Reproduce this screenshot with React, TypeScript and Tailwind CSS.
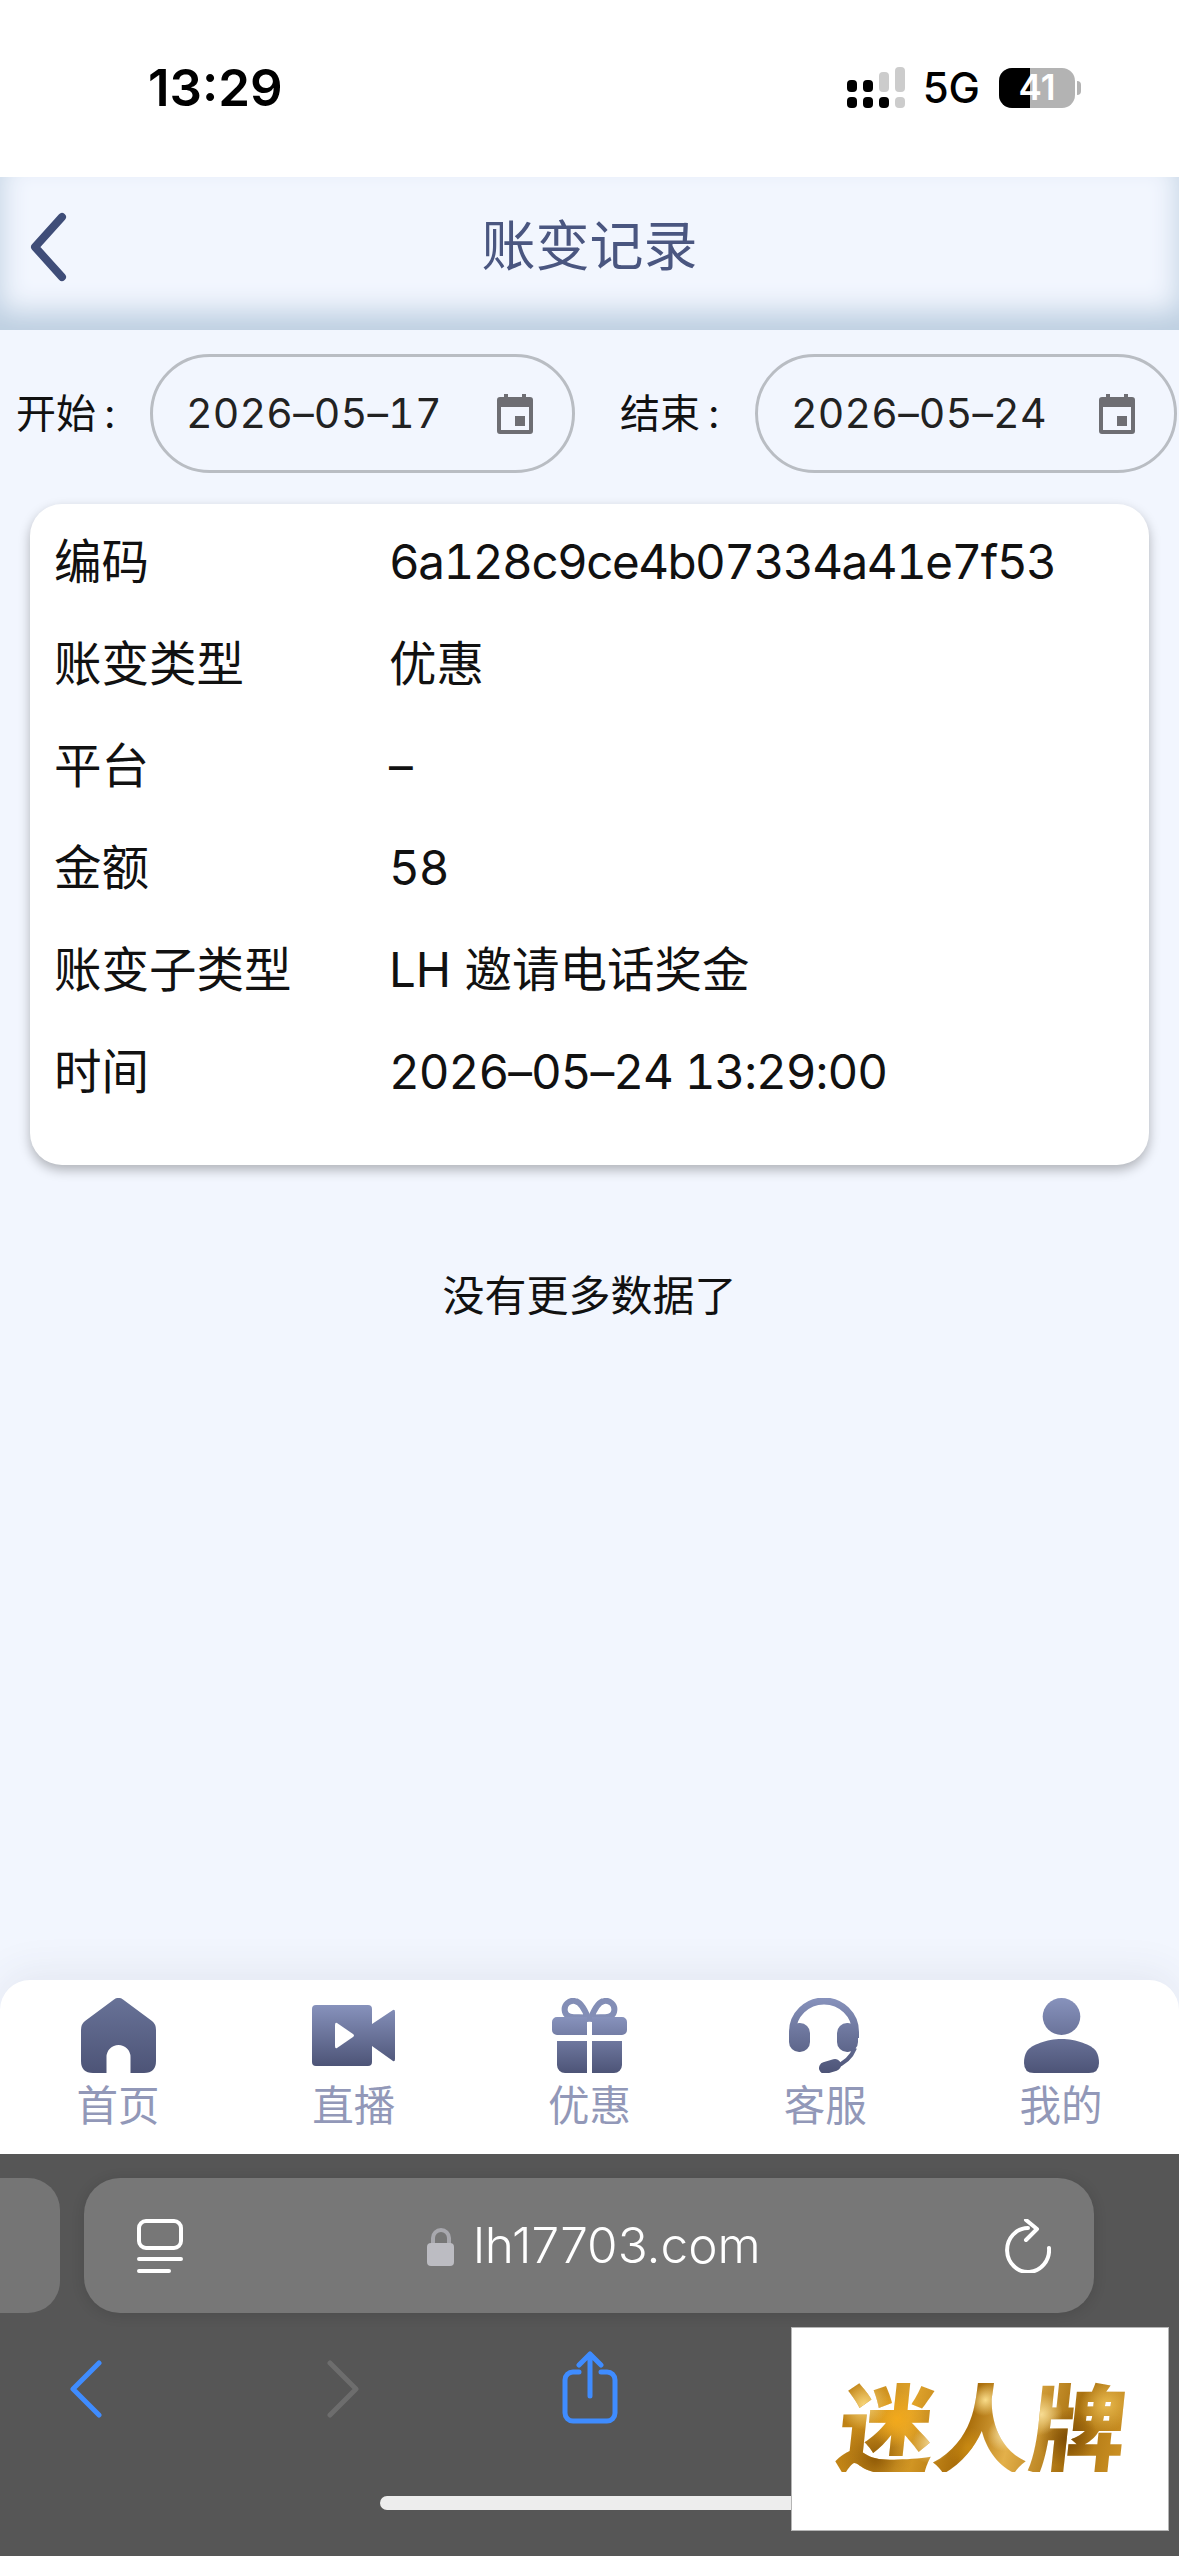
const rows = [
  { label: "编码", value: "6a128c9ce4b07334a41e7f53", spacing: "tracking-[-1.5px] tabular-nums" },
  { label: "账变类型", value: "优惠", spacing: "" },
  { label: "平台", value: "–", spacing: "" },
  { label: "金额", value: "58", spacing: "tracking-[-1px] tabular-nums" },
  { label: "账变子类型", value: "LH 邀请电话奖金", spacing: "" },
  { label: "时间", value: "2026–05–24 13:29:00", spacing: "tracking-[-1px] tabular-nums" },
]

function SignalIcon() {
  return (
    <svg width="60" height="42" viewBox="0 0 60 42">
      <rect x="0" y="13" width="10" height="12" rx="4" fill="#000" />
      <rect x="16" y="13" width="10" height="12" rx="4" fill="#000" />
      <rect x="32" y="5" width="10" height="20" rx="4" fill="#ccc" />
      <rect x="48" y="0" width="10" height="25" rx="4" fill="#ccc" />
      <rect x="0" y="30" width="10" height="11" rx="4" fill="#000" />
      <rect x="16" y="30" width="10" height="11" rx="4" fill="#000" />
      <rect x="32" y="30" width="10" height="11" rx="4" fill="#000" />
      <rect x="48" y="30" width="10" height="11" rx="4" fill="#ccc" />
    </svg>
  )
}

function CalendarIcon() {
  return (
    <svg width="36" height="40" viewBox="0 0 36 40" fill="#6e6e73" className="shrink-0">
      <path fillRule="evenodd" d="M3 3h4V0h4v3h14V0h4v3h4a3 3 0 0 1 3 3v31a3 3 0 0 1-3 3H3a3 3 0 0 1-3-3V6a3 3 0 0 1 3-3zM4 13v23h28V13H4z" />
      <rect x="18" y="22" width="10" height="10" />
    </svg>
  )
}

function DatePill({ value, width }: { value: string; width: string }) {
  return (
    <div className={`${width} flex h-[119px] items-center justify-between rounded-[60px] border-[3px] border-[#b9bdc3] pl-[33px] pr-[39px]`}>
      <span className="text-[41px] leading-none tracking-[0.2px] text-[#222] tabular-nums">{value}</span>
      <CalendarIcon />
    </div>
  )
}

function NavGradients() {
  return (
    <svg width="0" height="0" className="absolute">
      <defs>
        <linearGradient id="navA" x1="0" y1="0" x2="0" y2="1">
          <stop offset="0" stopColor="#8792bc" />
          <stop offset="1" stopColor="#4d5477" />
        </linearGradient>
        <linearGradient id="navB" x1="0" y1="0" x2="0" y2="1">
          <stop offset="0" stopColor="#687297" />
          <stop offset="1" stopColor="#4d5477" />
        </linearGradient>
      </defs>
    </svg>
  )
}

function HomeIcon() {
  return (
    <svg width="75" height="75" viewBox="0 0 75 75" className="ml-[2px]">
      <path fill="url(#navB)" d="M33 1.500a7 7 0 0 1 9 0L71 23q4 3 4 9v31q0 12-12 12H49.500V59a12 12 0 0 0-24 0v16H12Q0 75 0 63V32q0-6 4-9z" />
    </svg>
  )
}

function VideoIcon() {
  return (
    <svg width="84" height="61" viewBox="0 0 84 61">
      <path fill="url(#navA)" d="M4 0h52a4 4 0 0 1 4 4v15L81 5q2-1 2 2v47q0 3-2 2L60 41v16a4 4 0 0 1-4 4H4a4 4 0 0 1-4-4V4a4 4 0 0 1 4-4z" />
      <path fill="#fff" d="M23 20q0-3 2-2l16 11q2 1.500 0 3L25 43q-2 1-2-2z" />
    </svg>
  )
}

function GiftIcon() {
  return (
    <svg width="75" height="75" viewBox="0 0 75 75">
      <g fill="none" stroke="#838eb6" strokeWidth="6">
        <path d="M36 20 C28 18 15 22 13 14 C11 6 18 2 23 3 C29 4 33 12 36 20z" />
        <path d="M39 20 C47 18 60 22 62 14 C64 6 57 2 52 3 C46 4 42 12 39 20z" />
      </g>
      <path fill="url(#navA)" d="M5 19h30v18H5a5 5 0 0 1-5-5v-8a5 5 0 0 1 5-5zM40 19h30a5 5 0 0 1 5 5v8a5 5 0 0 1-5 5H40zM5 43h30v32H13a8 8 0 0 1-8-8zM40 43h30v24a8 8 0 0 1-8 8H40z" />
    </svg>
  )
}

function HeadsetIcon() {
  return (
    <svg width="70" height="75" viewBox="0 0 70 75" className="-ml-[2px]">
      <defs>
        <linearGradient id="navC" gradientUnits="userSpaceOnUse" x1="0" y1="0" x2="0" y2="75">
          <stop offset="0" stopColor="#8792bc" />
          <stop offset="1" stopColor="#4d5477" />
        </linearGradient>
      </defs>
      <path fill="none" stroke="url(#navC)" strokeWidth="7" d="M3.500 40V34a31.500 31 0 0 1 63 0v6" />
      <rect x="0" y="25" width="21" height="29" rx="10" fill="url(#navC)" />
      <rect x="48" y="25" width="21" height="29" rx="10" fill="url(#navC)" />
      <path fill="none" stroke="url(#navC)" strokeWidth="4" d="M66 50C62 60 55 66 45 69" />
      <path fill="none" stroke="url(#navC)" strokeWidth="12" strokeLinecap="round" d="M36 70l10-3" />
    </svg>
  )
}

function UserIcon() {
  return (
    <svg width="75" height="75" viewBox="0 0 75 75">
      <defs>
        <linearGradient id="navD" gradientUnits="userSpaceOnUse" x1="0" y1="0" x2="0" y2="75">
          <stop offset="0" stopColor="#8792bc" />
          <stop offset="1" stopColor="#4d5477" />
        </linearGradient>
      </defs>
      <ellipse cx="37.500" cy="18.500" rx="18.800" ry="18.500" fill="url(#navD)" />
      <path fill="url(#navD)" d="M37.500 41C52 41 68 47 72 53q3 5 3 12 0 10-10 10H10Q0 75 0 65q0-7 3-12C7 47 23 41 37.500 41z" />
    </svg>
  )
}

const tabs = [
  { label: "首页", icon: <HomeIcon /> },
  { label: "直播", icon: <VideoIcon /> },
  { label: "优惠", icon: <GiftIcon /> },
  { label: "客服", icon: <HeadsetIcon /> },
  { label: "我的", icon: <UserIcon /> },
]

export default function App() {
  return (
    <div className="relative flex h-[2556px] w-[1179px] flex-col overflow-hidden bg-[#f2f6fe] font-['Inter','Noto_Sans_CJK_SC',sans-serif] text-black">
      {/* status bar */}
      <div className="flex h-[177px] items-center justify-between bg-white pb-[2px] pl-[148px] pr-[98px]">
        <span className="text-[51px] font-semibold leading-none">13:29</span>
        <div className="flex items-center">
          <SignalIcon />
          <span className="ml-[16px] text-[42px] font-medium leading-none">5G</span>
          <div className="relative ml-[19px] flex h-[40px] w-[76px] overflow-hidden rounded-[13px] bg-[#b3b3b3]">
            <div className="w-[31px] bg-black" />
            <span className="absolute inset-0 flex items-center justify-center text-[35px] font-semibold leading-none text-white">41</span>
          </div>
          <div className="ml-[2px] h-[14px] w-[4px] rounded-r-full bg-[#b3b3b3]" />
        </div>
      </div>

      {/* header */}
      <div className="grid h-[153px] grid-cols-[1fr_auto_1fr] items-center bg-[#f2f6fe] shadow-[inset_0_-18px_28px_0_#bccee0]">
        <div className="pl-[28px] pb-[14px]">
          <svg width="40" height="72" viewBox="0 0 40 72" fill="none" stroke="#3f4d78" strokeWidth="8" strokeLinecap="round" strokeLinejoin="round">
            <path d="M34 6 7 36l27 30" />
          </svg>
        </div>
        <h1 className="pb-[14px] text-[54px] font-normal leading-none text-[#4a5680]">账变记录</h1>
        <div />
      </div>

      {/* date filter */}
      <div className="mt-[24px] flex items-center pl-[16px] text-[40px] text-[#111]">
        <span className="w-[134px] leading-none">开始<span className="ml-[8px]">:</span></span>
        <DatePill value="2026–05–17" width="w-[425px]" />
        <span className="ml-[45px] w-[135px] leading-none">结束<span className="ml-[8px]">:</span></span>
        <DatePill value="2026–05–24" width="w-[422px]" />
      </div>

      {/* record card */}
      <div className="mx-[30px] mt-[31px] rounded-[32px] bg-white pb-[42px] pl-[24px] pt-[7px] shadow-[0_5px_12px_rgba(0,0,0,0.28)]">
        {rows.map((row) => (
          <div key={row.label} className="flex h-[102px] items-center text-[47.5px] leading-none text-[#111]">
            <span className="w-[335px] shrink-0">{row.label}</span>
            <span className={row.spacing}>{row.value}</span>
          </div>
        ))}
      </div>

      <p className="mt-[110px] text-center text-[42px] leading-none text-[#111]">没有更多数据了</p>

      <div className="flex-1" />

      {/* bottom nav */}
      <NavGradients />
      <div className="grid h-[174px] grid-cols-5 rounded-t-[30px] bg-white pt-[18px] shadow-[0_-8px_40px_rgba(60,70,90,0.08)]">
        {tabs.map((tab) => (
          <div key={tab.label} className="flex flex-col items-center">
            <div className="flex h-[75px] items-center">{tab.icon}</div>
            <span className="mt-[13px] text-[41.5px] leading-none text-[#9298b8]">{tab.label}</span>
          </div>
        ))}
      </div>

      {/* safari chrome */}
      <div className="flex h-[402px] flex-col bg-[#565656]">
        <div className="mt-[24px] flex gap-[24px]">
          <div className="h-[135px] w-[60px] rounded-r-[32px] bg-[#757575]" />
          <div className="flex h-[135px] w-[1010px] items-center rounded-[36px] bg-[#777] pl-[53px] pr-[43px] shadow-[0_2px_14px_rgba(0,0,0,0.12)]">
            <svg width="46" height="54" viewBox="0 0 46 54" fill="none" stroke="#fff" strokeWidth="4" strokeLinecap="round" className="shrink-0">
              <rect x="2" y="2" width="42" height="27" rx="7" />
              <path d="M2 40h42M2 52h30" />
            </svg>
            <div className="flex flex-1 items-center justify-center">
              <svg width="28" height="40" viewBox="0 0 28 40" className="shrink-0">
                <path d="M6 18v-6a8 8 0 0 1 16 0v6" fill="none" stroke="#a8a8ae" strokeWidth="4" />
                <rect x="0" y="17" width="27" height="23" rx="4" fill="#bcbcc2" />
              </svg>
              <span className="ml-[18px] text-[49.500px] font-light leading-none text-white">lh17703.com</span>
            </div>
            <svg width="46" height="54" viewBox="0 0 46 54" fill="none" stroke="#fff" strokeWidth="4" strokeLinecap="round" strokeLinejoin="round" className="shrink-0">
              <path d="M44 29A21 22 0 1 1 23 9" />
              <path d="M21 1l11 9-11 11" />
            </svg>
          </div>
        </div>

        <div className="mt-[38px] flex h-[72px] items-start">
          <svg width="34" height="58" viewBox="0 0 34 58" fill="none" stroke="#3f8cff" strokeWidth="5" strokeLinecap="round" strokeLinejoin="round" className="ml-[69px] mt-[9px]">
            <path d="M30 3 4 29l26 26" />
          </svg>
          <svg width="34" height="58" viewBox="0 0 34 58" fill="none" stroke="#6d6d6d" strokeWidth="5" strokeLinecap="round" strokeLinejoin="round" className="ml-[223px] mt-[9px]">
            <path d="M4 3l26 26L4 55" />
          </svg>
          <svg width="60" height="74" viewBox="0 0 60 74" fill="none" stroke="#3f8cff" strokeWidth="5" strokeLinecap="round" strokeLinejoin="round" className="ml-[200px]">
            <path d="M19 21H13a8 8 0 0 0-8 8v33a8 8 0 0 0 8 8h34a8 8 0 0 0 8-8V29a8 8 0 0 0-8-8h-6" />
            <path d="M30 45V3M19 14 30 3l11 11" />
          </svg>
        </div>

        <div className="ml-[380px] mt-[73px] h-[14px] w-[420px] rounded-full bg-[#ededed]" />
      </div>

      {/* logo sticker pasted over the chrome */}
      <div className="absolute left-[791px] top-[2327px] flex h-[204px] w-[378px] items-center justify-center border-[1px] border-[#b5b5b5] bg-white pb-[10px] pl-[6px]">
        <span className="-skew-x-[6deg] bg-[radial-gradient(circle_at_8%_30%,#f7d57a_0,transparent_9%),radial-gradient(circle_at_20%_45%,#f2a91c_0,transparent_12%),radial-gradient(circle_at_14%_85%,#8f5a07_0,transparent_14%),radial-gradient(circle_at_33%_70%,#f5dc9a_0,transparent_10%),radial-gradient(circle_at_50%_25%,#f9dc8a_0,transparent_10%),radial-gradient(circle_at_46%_75%,#c98a12_0,transparent_12%),radial-gradient(circle_at_58%_60%,#f6e2a6_0,transparent_10%),radial-gradient(circle_at_70%_40%,#f7dc93_0,transparent_10%),radial-gradient(circle_at_80%_65%,#7d4c05_0,transparent_12%),radial-gradient(circle_at_92%_30%,#e8b94e_0,transparent_10%),linear-gradient(100deg,#b87a0e,#dfa32c_25%,#a96d0a_45%,#e3b04a_60%,#a8700f_80%,#cf9426)] bg-clip-text font-['Noto_Sans_CJK_SC',sans-serif] text-[96px] font-black leading-none text-transparent">
          迷人牌
        </span>
      </div>
    </div>
  )
}
